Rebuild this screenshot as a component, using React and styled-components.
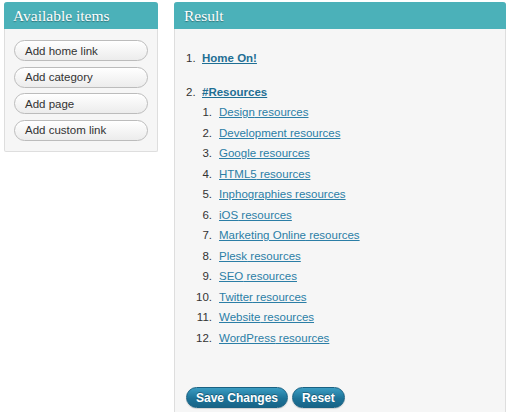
import React from "react";
import styled, { createGlobalStyle } from "styled-components";

const Global = createGlobalStyle`
  body {
    margin: 0;
    background: #fff;
    font-family: "Liberation Sans", Arial, sans-serif;
  }
`;

const Page = styled.div`
  display: flex;
  align-items: flex-start;
  gap: 16px;
  padding: 2px 0 0 4px;
`;

const Panel = styled.div`
  width: ${(p) => p.width}px;
  box-sizing: border-box;
  background: #f6f6f6;
  border: 1px solid #dedede;
  border-top: none;
  border-radius: 3px 3px 2px 2px;
`;

const Header = styled.div`
  height: 27px;
  margin: 0 -1px;
  padding-left: ${(p) => p.pad}px;
  background: #4bb1b9;
  border-radius: 3px 3px 0 0;
  color: #fff;
  font-family: "Liberation Serif", Georgia, serif;
  font-size: 15.5px;
  line-height: 28px;
  text-shadow: 0 1px 1px rgba(0, 0, 0, 0.35);
`;

const Tools = styled.div`
  display: flex;
  flex-direction: column;
  gap: 5.5px;
  padding: 11px 9px 10px;
`;

const AddButton = styled.button`
  height: 21px;
  padding: 0 0 0 10px;
  text-align: left;
  border: 1px solid #bcbcbc;
  border-radius: 11px;
  background: linear-gradient(#ffffff, #ececec);
  color: #333;
  font-family: "Liberation Sans", Arial, sans-serif;
  font-size: 11.5px;
  box-shadow: inset 0 1px 0 #fff;
`;

const Body = styled.div`
  padding: 19px 0 120px 11px;
  font-size: 11.5px;
`;

const Row = styled.div`
  display: flex;
  align-items: center;
  gap: ${(p) => (p.sub ? 7 : 6)}px;
  height: ${(p) => (p.sub ? 20.5 : 20)}px;
  margin-left: ${(p) => (p.sub ? 10 : 0)}px;
`;

const Num = styled.span`
  width: ${(p) => (p.sub ? 16 : 10)}px;
  text-align: ${(p) => (p.sub ? "right" : "left")};
  color: #333;
`;

const Link = styled.a`
  color: ${(p) => (p.top ? "#1f6f94" : "#2b7ea6")};
  font-weight: ${(p) => (p.top ? "bold" : "normal")};
  text-decoration: underline;
`;

const Group = styled.div`
  margin-top: ${(p) => p.top}px;
`;

const Actions = styled.div`
  display: flex;
  gap: 4px;
  margin-top: 39px;
`;

const MainButton = styled.button`
  height: 21px;
  padding: 0 ${(p) => p.pad}px;
  border: 1px solid #1a6283;
  border-radius: 11px;
  background: linear-gradient(#3a9cc2, #1d7398 55%, #186487);
  color: #fff;
  font-family: "Liberation Sans", Arial, sans-serif;
  font-size: 12px;
  font-weight: bold;
  text-shadow: 0 -1px 0 rgba(0, 0, 0, 0.3);
  box-shadow: 0 1px 1px rgba(0, 0, 0, 0.15);
`;

const adders = ["Add home link", "Add category", "Add page", "Add custom link"];

const resources = [
  "Design",
  "Development",
  "Google",
  "HTML5",
  "Inphographies",
  "iOS",
  "Marketing Online",
  "Plesk",
  "SEO",
  "Twitter",
  "Website",
  "WordPress",
];

export default function App() {
  return (
    <>
      <Global />
      <Page>
        <Panel width={154}>
          <Header pad={9}>Available items</Header>
          <Tools>
            {adders.map((a) => (
              <AddButton key={a}>{a}</AddButton>
            ))}
          </Tools>
        </Panel>
        <Panel width={332}>
          <Header pad={10}>Result</Header>
          <Body>
            <Row>
              <Num>1.</Num>
              <Link top href="#">Home On!</Link>
            </Row>
            <Group top={14}>
              <Row>
                <Num>2.</Num>
                <Link top href="#">#Resources</Link>
              </Row>
              {resources.map((r, i) => (
                <Row sub key={r}>
                  <Num sub>{i + 1}.</Num>
                  <Link href="#">{r} resources</Link>
                </Row>
              ))}
            </Group>
            <Actions>
              <MainButton pad={9}>Save Changes</MainButton>
              <MainButton pad={9}>Reset</MainButton>
            </Actions>
          </Body>
        </Panel>
      </Page>
    </>
  );
}
